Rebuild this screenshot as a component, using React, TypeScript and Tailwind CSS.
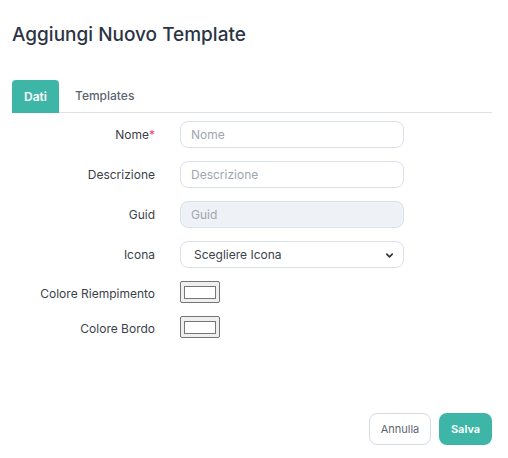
import { ChevronDown } from "lucide-react"

const fields = [
  { label: "Nome", placeholder: "Nome", required: true },
  { label: "Descrizione", placeholder: "Descrizione" },
  { label: "Guid", placeholder: "Guid", disabled: true },
]

function ColorSwatch() {
  return (
    <div className="w-[40px] h-[22px] bg-[#efefef] border border-[#767676] rounded-[2px] flex items-center justify-center">
      <div className="w-[32px] h-[13px] bg-white border border-[#777]" />
    </div>
  )
}

export default function App() {
  return (
    <div
      className="w-[508px] h-[458px] bg-white pl-3 pr-4 flex flex-col"
      style={{ fontFamily: "Inter, 'Open Sans', sans-serif" }}
    >
      <h1 className="mt-[23px] text-[19px] leading-[24px] font-medium text-[#2c3444]">Aggiungi Nuovo Template</h1>

      <div className="mt-[33px] flex items-end border-b border-[#dee2e6] h-[33px]">
        <div className="w-[47px] h-[33px] -mb-px bg-[#3eb6a7] rounded-t-[4px] flex items-center justify-center text-white text-[12px] font-semibold">
          Dati
        </div>
        <div className="h-[32px] px-4 flex items-center text-[12px] font-medium text-[#5e6572]">Templates</div>
      </div>

      <div className="mt-[8px] flex flex-col gap-[13px] text-[12px]">
        {fields.map((f) => (
          <div key={f.label} className="flex items-center gap-[25px]">
            <label className="w-[143px] text-right text-[#3b3f4a]">
              {f.label}
              {f.required && <span className="text-[#f1416c]">*</span>}
            </label>
            <input
              disabled={f.disabled}
              placeholder={f.placeholder}
              className={`w-[224px] h-[27px] px-[10px] rounded-[8px] border border-[#dbe1ea] text-[12px] outline-none placeholder:text-[#a1a5b0] ${
                f.disabled ? "bg-[#eef1f5]" : "bg-white"
              }`}
            />
          </div>
        ))}

        <div className="flex items-center gap-[25px]">
          <label className="w-[143px] text-right text-[#3b3f4a]">Icona</label>
          <div className="relative w-[224px] h-[27px] rounded-[8px] border border-[#dbe1ea] flex items-center pl-[13px] text-[#3b3f4a]">
            Scegliere Icona
            <ChevronDown className="absolute right-[8px] top-[8px] w-[11px] h-[11px] text-[#333]" strokeWidth={3.5} />
          </div>
        </div>

        <div className="flex items-center gap-[25px]">
          <label className="w-[143px] text-right text-[#3b3f4a] pt-[3px]">Colore Riempimento</label>
          <ColorSwatch />
        </div>

        <div className="flex items-center gap-[25px]">
          <label className="w-[143px] text-right text-[#3b3f4a] pt-[3px]">Colore Bordo</label>
          <ColorSwatch />
        </div>
      </div>

      <div className="mt-auto mb-[13px] flex justify-end gap-2">
        <button className="w-[62px] h-[32px] rounded-[8px] border border-[#d5dbe4] bg-white text-[11px] text-[#5e6572]">
          Annulla
        </button>
        <button className="w-[53px] h-[32px] rounded-[8px] bg-[#3eb6a7] text-[11px] font-semibold text-white">
          Salva
        </button>
      </div>
    </div>
  )
}
